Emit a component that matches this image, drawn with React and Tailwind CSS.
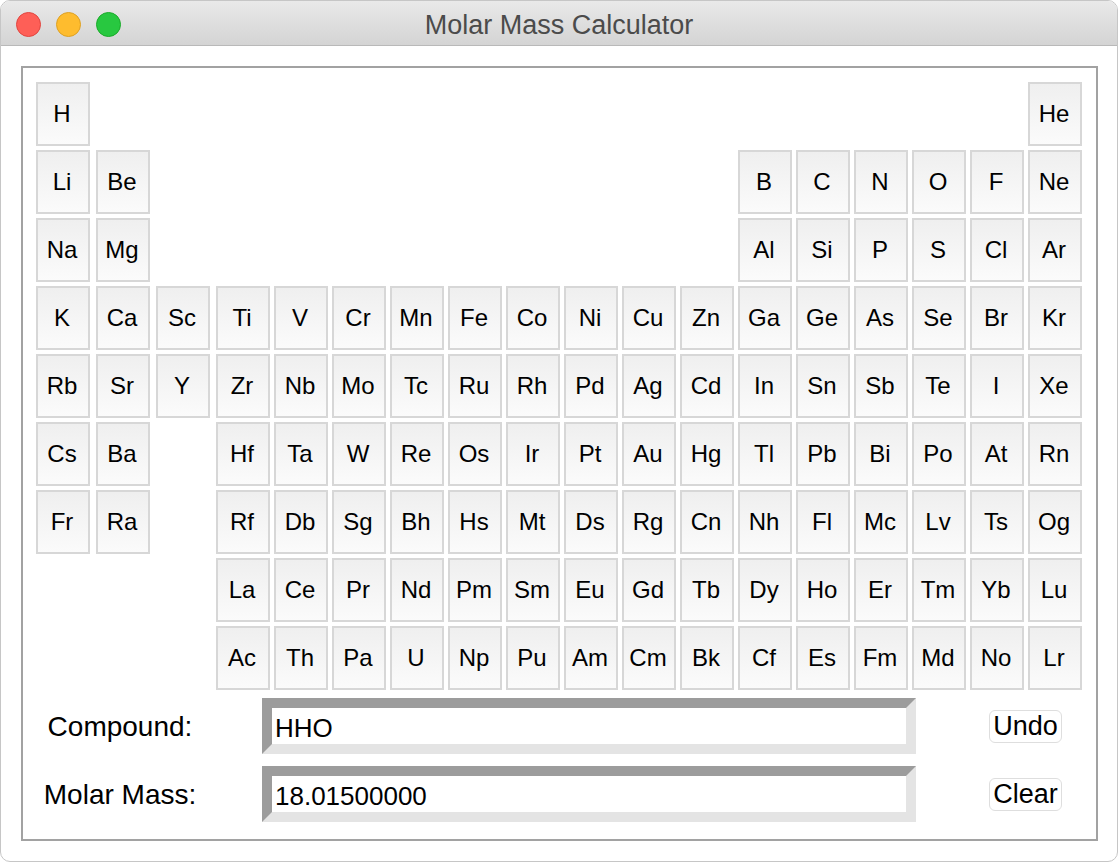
import React from "react";

const rows = [
  ["H", null, null, null, null, null, null, null, null, null, null, null, null, null, null, null, null, "He"],
  ["Li", "Be", null, null, null, null, null, null, null, null, null, null, "B", "C", "N", "O", "F", "Ne"],
  ["Na", "Mg", null, null, null, null, null, null, null, null, null, null, "Al", "Si", "P", "S", "Cl", "Ar"],
  ["K", "Ca", "Sc", "Ti", "V", "Cr", "Mn", "Fe", "Co", "Ni", "Cu", "Zn", "Ga", "Ge", "As", "Se", "Br", "Kr"],
  ["Rb", "Sr", "Y", "Zr", "Nb", "Mo", "Tc", "Ru", "Rh", "Pd", "Ag", "Cd", "In", "Sn", "Sb", "Te", "I", "Xe"],
  ["Cs", "Ba", null, "Hf", "Ta", "W", "Re", "Os", "Ir", "Pt", "Au", "Hg", "Tl", "Pb", "Bi", "Po", "At", "Rn"],
  ["Fr", "Ra", null, "Rf", "Db", "Sg", "Bh", "Hs", "Mt", "Ds", "Rg", "Cn", "Nh", "Fl", "Mc", "Lv", "Ts", "Og"],
  [null, null, null, "La", "Ce", "Pr", "Nd", "Pm", "Sm", "Eu", "Gd", "Tb", "Dy", "Ho", "Er", "Tm", "Yb", "Lu"],
  [null, null, null, "Ac", "Th", "Pa", "U", "Np", "Pu", "Am", "Cm", "Bk", "Cf", "Es", "Fm", "Md", "No", "Lr"],
];

function Cell({ symbol }) {
  if (!symbol) return <div className="h-[64px] w-[54px]" />;
  return (
    <button className="flex h-[64px] w-[54px] items-center justify-center border-2 border-[#d7d7d7] bg-gradient-to-b from-[#efefef] to-[#fbfbfb] pr-[2px] text-[24px] leading-none text-black">
      {symbol}
    </button>
  );
}

function Field({ label, value, action }) {
  return (
    <div className="flex h-[56px] items-center">
      <div className="w-[194px] pt-[2px] text-center text-[28px] leading-none text-black">{label}</div>
      <div className="ml-[45px] flex h-[56px] w-[654px] items-center border-[10px] border-t-[#9c9c9c] border-l-[#9c9c9c] border-b-[#e4e4e4] border-r-[#e4e4e4] bg-white pl-[3px] pt-[3px] text-[26px] leading-none text-black">
        {value}
      </div>
      <button className="ml-[73px] flex h-[33px] w-[73px] items-center justify-center rounded-[6px] border border-[#dedede] bg-white text-[27px] leading-none text-black">
        {action}
      </button>
    </div>
  );
}

export default function App() {
  return (
    <div className="h-[864px] w-[1120px] bg-white" style={{ fontFamily: '"Liberation Sans", Arial, sans-serif' }}>
      <div className="flex h-[862px] w-[1118px] flex-col overflow-hidden rounded-[10px] border border-[#c6c6c6] bg-white">
        <div className="relative flex h-[45px] shrink-0 items-center justify-center border-b border-[#b9b9b9] bg-gradient-to-b from-[#e9e9e9] to-[#d4d4d4] pt-[4px]">
          <div className="absolute left-[15px] top-[11px] flex gap-[15px]">
            <span className="h-[25px] w-[25px] rounded-full border border-[#e1453f] bg-[#fe5f57]" />
            <span className="h-[25px] w-[25px] rounded-full border border-[#dea123] bg-[#febc2e]" />
            <span className="h-[25px] w-[25px] rounded-full border border-[#1aab29] bg-[#28c840]" />
          </div>
          <span className="text-[27px] leading-none text-[#4b4b4b]">Molar Mass Calculator</span>
        </div>

        <div className="ml-[20px] mt-[20px] h-[775px] w-[1077px] border-2 border-[#a2a2a2] bg-white">
          <div className="grid grid-cols-[60px_60px_60px_repeat(15,58px)] auto-rows-[68px] pl-[13px] pt-[14px]">
            {rows.map((row, r) =>
              row.map((s, c) => <Cell key={r + "-" + c} symbol={s} />)
            )}
          </div>
          <div className="mt-[4px] flex flex-col gap-[12px]">
            <Field label="Compound:" value="HHO" action="Undo" />
            <Field label="Molar Mass:" value="18.01500000" action="Clear" />
          </div>
        </div>
      </div>
    </div>
  );
}
